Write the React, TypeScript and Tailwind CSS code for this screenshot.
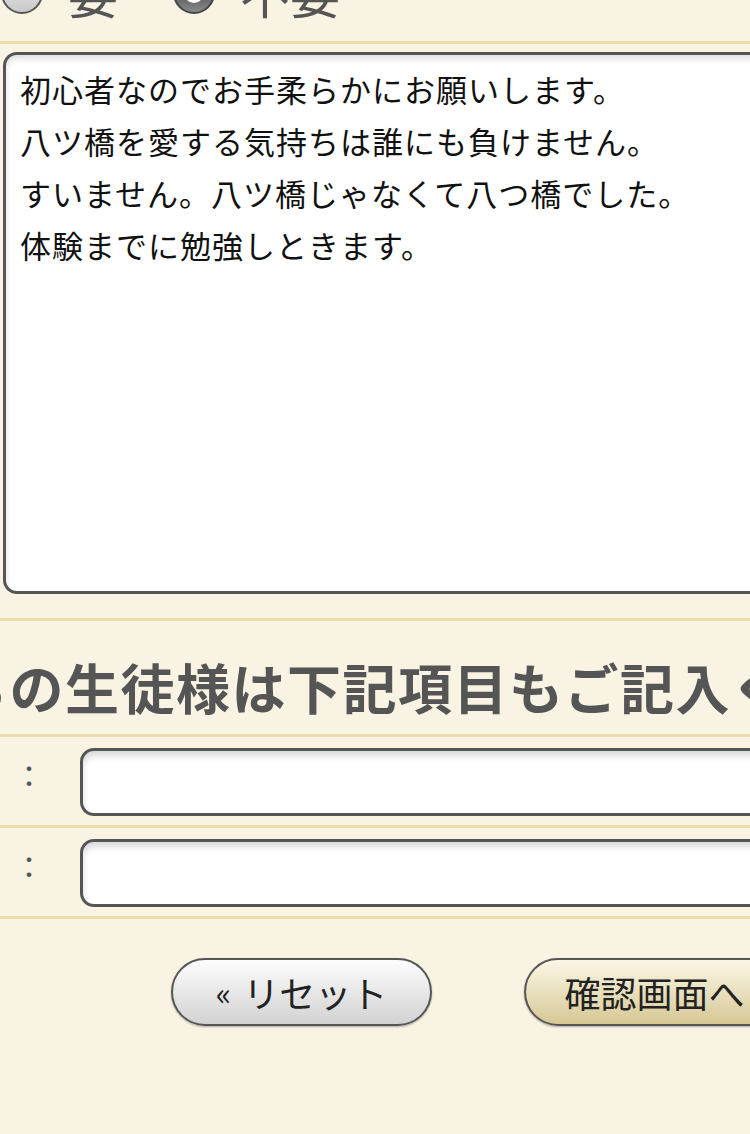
import React from 'react';

const lines = [
  '初心者なのでお手柔らかにお願いします。',
  '八ツ橋を愛する気持ちは誰にも負けません。',
  'すいません。八ツ橋じゃなくて八つ橋でした。',
  '体験までに勉強しときます。',
];

function Radio({ checked }: { checked: boolean }) {
  if (checked) {
    return (
      <span className="w-[42px] h-[42px] shrink-0 rounded-full border-[2px] border-[#444] bg-linear-to-b from-[#333] to-[#888] flex items-center justify-center">
        <span className="w-[20px] h-[20px] rounded-full bg-white flex items-center justify-center">
          <span className="w-[11px] h-[11px] rounded-full bg-[#444]"></span>
        </span>
      </span>
    );
  }
  return (
    <span className="w-[42px] h-[42px] shrink-0 rounded-full border-[2px] border-[#555] bg-linear-to-b from-[#f2f2f2] to-[#c8c8c8]"></span>
  );
}

function FieldRow({ label }: { label: string }) {
  return (
    <div className="flex items-center border-b-[3px] border-[#ecdcab] pt-[11px] pb-[9px]">
      <div className="w-[80px] shrink-0 flex justify-end pr-[36px] text-[30px] text-[#555] whitespace-nowrap -mt-[16px]">
        {label}
        <span className="ml-[18px]">：</span>
      </div>
      <input
        type="text"
        className="w-[800px] shrink-0 h-[68px] rounded-[14px] border-[3px] border-[#555] bg-white shadow-[inset_0_5px_6px_rgba(0,0,0,0.15)] outline-none"
      />
    </div>
  );
}

export default function App() {
  return (
    <div className="w-full min-h-[1134px] overflow-hidden bg-[#f9f3e3] font-['Noto_Sans_CJK_JP','Noto_Sans',sans-serif]">
      {/* radio row, top cut off */}
      <div className="h-[100px] -mt-[56px] flex items-center pl-[1px] text-[50px] text-[#555] border-b-[3px] border-[#ecdcab] whitespace-nowrap">
        <Radio checked={false} />
        <span className="ml-[25px]">要</span>
        <span className="ml-[55px]"><Radio checked={true} /></span>
        <span className="ml-[25px]">不要</span>
      </div>

      <div className="pt-[8px] pb-[24px] pl-[3px] border-b-[3px] border-[#ecdcab]">
        <textarea
          readOnly
          defaultValue={lines.join('\n')}
          className="block w-[800px] h-[542px] rounded-[14px] border-[3px] border-[#555] bg-white pt-[8px] pl-[14px] text-[31px] tracking-[1px] leading-[52px] text-[#111] resize-none shadow-[inset_0_4px_6px_rgba(0,0,0,0.12)] outline-none overflow-hidden"
        />
      </div>

      <div className="pt-[38px] pb-[19px] border-b-[3px] border-[#ecdcab]">
        <div className="-ml-[157px] whitespace-nowrap text-[54px] tracking-[1.5px] leading-[56px] font-bold text-[#555]">
          お持ちの生徒様は下記項目もご記入ください
        </div>
      </div>

      <FieldRow label="学校名" />
      <FieldRow label="学年" />

      <div className="flex gap-[92px] pl-[171px] pt-[39px] whitespace-nowrap">
        <button className="w-[261px] h-[68px] shrink-0 rounded-full border-[2px] border-[#555] bg-linear-to-b from-[#fdfdfd] to-[#d2d2d2] text-[36px] text-[#222] shadow-[0_1px_2px_rgba(0,0,0,0.3)] flex items-center justify-center">
          <span className="text-[32px] mr-[12px]">«</span>リセット
        </button>
        <button className="w-[261px] h-[68px] shrink-0 rounded-full border-[2px] border-[#555] bg-linear-to-b from-[#fbf7e6] to-[#d6c895] text-[36px] text-[#222] shadow-[0_1px_2px_rgba(0,0,0,0.3)] flex items-center justify-center">
          確認画面へ
        </button>
      </div>
    </div>
  );
}
